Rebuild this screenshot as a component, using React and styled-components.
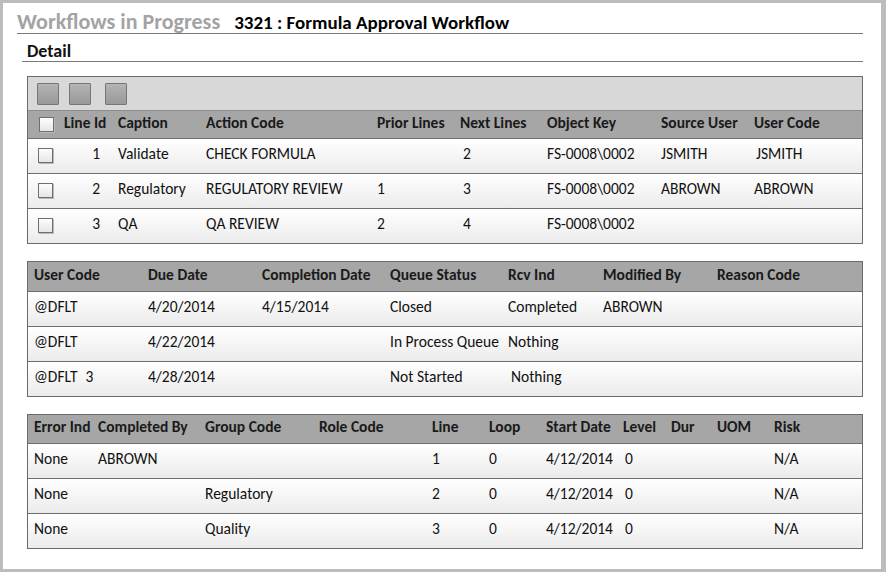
import React from 'react';
import styled, { createGlobalStyle } from 'styled-components';

const GlobalStyle = createGlobalStyle`
  html, body {
    margin: 0;
    padding: 0;
    background: #ffffff;
  }
  body {
    font-family: Carlito, Lato, "Liberation Sans", sans-serif;
    color: #111;
  }
`

const Frame = styled.div`
  width: 886px;
  height: 572px;
  box-sizing: border-box;
  border: 3px solid #bcbcbc;
  border-right-width: 5px;
  padding: 8px 18px 0 14px;
  background: #fff;
`

const TitleRow = styled.div`
  display: flex;
  align-items: baseline;
  gap: 14px;
  height: 22px;
  border-bottom: 1px solid #7a7a7a;
`

const PageTitle = styled.span`
  font-size: 22px;
  font-weight: 700;
  color: #a3a3a3;
  line-height: 22px;
`

const RecordTitle = styled.span`
  font-size: 19px;
  font-weight: 700;
  color: #000;
  line-height: 22px;
`

const SectionTitle = styled.div`
  margin: 7px 0 0 5px;
  padding-left: 5px;
  height: 20px;
  line-height: 20px;
  font-size: 18px;
  font-weight: 700;
  border-bottom: 1px solid #7a7a7a;
`

const Tables = styled.div`
  display: flex;
  flex-direction: column;
  gap: 17px;
  margin: 14px 0 0 10px;
  width: 836px;
`

const Grid = styled.div`
  border: 1px solid #6a6a6a;
  background: #fff;
  font-size: 15.5px;
`

const Toolbar = styled.div`
  display: flex;
  align-items: center;
  gap: 10px;
  height: 34px;
  box-sizing: border-box;
  padding-left: 9px;
  background: #d8d8d8;
  border-bottom: 1px solid #8c8c8c;
`

const ToolButton = styled.div`
  width: 20px;
  height: 20px;
  margin-left: ${p => (p.$extra ? '4px' : '0')};
  border: 1px solid #767676;
  border-radius: 1px;
  background: linear-gradient(#b4b4b4, #989898);
`

const Row = styled.div`
  display: grid;
  grid-template-columns: ${p => p.$cols};
  align-items: center;
  padding-left: ${p => p.$indent}px;
  box-sizing: border-box;
  white-space: nowrap;
`

const HeadRow = styled(Row)`
  height: ${p => p.$h}px;
  padding-bottom: 5px;
  background: #a6a6a6;
  font-weight: 700;
  color: #1a1a1a;
`

const BodyRow = styled(Row)`
  height: 35px;
  padding-bottom: 6px;
  background: linear-gradient(#ffffff, #ebebeb);
  border-top: 1px solid #6f6f6f;
`

const Cell = styled.span`
  text-align: ${p => (p.$right ? 'right' : 'left')};
  padding-right: ${p => (p.$right ? '18px' : '0')};
  padding-left: ${p => p.$shift || 0}px;
`

const Check = styled.span`
  display: block;
  width: 13px;
  height: 13px;
  margin-left: ${p => p.$shift || 0}px;
  margin-top: ${p => (p.$row ? '4px' : '0')};
  border: 1px solid #6e6e6e;
  background: linear-gradient(#fdfdfd, #e6e6e6);
  box-shadow: 1px 1px 0 #b9b9b9;
`

const UserCell = styled.span`
  margin-left: 8px;
`

const lineCols = '26px 54px 88px 171px 83px 87px 114px 93px 1fr'
const queueCols = '114px 114px 128px 118px 95px 114px 1fr'
const detailCols = '64px 107px 114px 113px 57px 57px 77px 48px 46px 57px 1fr'

const lines = [
  ['1', 'Validate', 'CHECK FORMULA', '', '2', 'FS-0008\\0002', 'JSMITH', 'JSMITH'],
  ['2', 'Regulatory', 'REGULATORY REVIEW', '1', '3', 'FS-0008\\0002', 'ABROWN', 'ABROWN'],
  ['3', 'QA', 'QA REVIEW', '2', '4', 'FS-0008\\0002', '', ''],
]

const queue = [
  ['@DFLT', '4/20/2014', '4/15/2014', 'Closed', 'Completed', 'ABROWN', ''],
  ['@DFLT', '4/22/2014', '', 'In Process Queue', 'Nothing', '', ''],
  ['@DFLT', '4/28/2014', '', 'Not Started', 'Nothing', '', ''],
]

const details = [
  ['None', 'ABROWN', '', '', '1', '0', '4/12/2014', '0', '', '', 'N/A'],
  ['None', '', 'Regulatory', '', '2', '0', '4/12/2014', '0', '', '', 'N/A'],
  ['None', '', 'Quality', '', '3', '0', '4/12/2014', '0', '', '', 'N/A'],
]

function App() {
  return (
    <Frame>
      <GlobalStyle />
      <TitleRow>
        <PageTitle>Workflows in Progress</PageTitle>
        <RecordTitle>3321 : Formula Approval Workflow</RecordTitle>
      </TitleRow>
      <SectionTitle>Detail</SectionTitle>

      <Tables>
        <Grid>
          <Toolbar>
            <ToolButton />
            <ToolButton />
            <ToolButton $extra />
          </Toolbar>
          <HeadRow $cols={lineCols} $indent={10} $h={27}>
            <Check $shift={1} $row />
            <Cell>Line Id</Cell>
            <Cell>Caption</Cell>
            <Cell>Action Code</Cell>
            <Cell>Prior Lines</Cell>
            <Cell>Next Lines</Cell>
            <Cell>Object Key</Cell>
            <Cell>Source User</Cell>
            <Cell>User Code</Cell>
          </HeadRow>
          {lines.map((r) => (
            <BodyRow key={r[0]} $cols={lineCols} $indent={10}>
              <Check $row />
              <Cell $right>{r[0]}</Cell>
              <Cell>{r[1]}</Cell>
              <Cell>{r[2]}</Cell>
              <Cell>{r[3]}</Cell>
              <Cell $shift={3}>{r[4]}</Cell>
              <Cell>{r[5]}</Cell>
              <Cell>{r[6]}</Cell>
              <Cell $shift={r[0] === '1' ? 2 : -3}>{r[7]}</Cell>
            </BodyRow>
          ))}
        </Grid>

        <Grid>
          <HeadRow $cols={queueCols} $indent={6} $h={29}>
            <Cell>User Code</Cell>
            <Cell>Due Date</Cell>
            <Cell>Completion Date</Cell>
            <Cell>Queue Status</Cell>
            <Cell>Rcv Ind</Cell>
            <Cell>Modified By</Cell>
            <Cell>Reason Code</Cell>
          </HeadRow>
          {queue.map((r, i) => (
            <BodyRow key={i} $cols={queueCols} $indent={6}>
              <Cell>
                {r[0]}
                {i === 2 && <UserCell>3</UserCell>}
              </Cell>
              <Cell>{r[1]}</Cell>
              <Cell>{r[2]}</Cell>
              <Cell>{r[3]}</Cell>
              <Cell $shift={i === 2 ? 3 : 0}>{r[4]}</Cell>
              <Cell>{r[5]}</Cell>
              <Cell>{r[6]}</Cell>
            </BodyRow>
          ))}
        </Grid>

        <Grid>
          <HeadRow $cols={detailCols} $indent={6} $h={28}>
            <Cell>Error Ind</Cell>
            <Cell>Completed By</Cell>
            <Cell>Group Code</Cell>
            <Cell>Role Code</Cell>
            <Cell>Line</Cell>
            <Cell>Loop</Cell>
            <Cell>Start Date</Cell>
            <Cell>Level</Cell>
            <Cell>Dur</Cell>
            <Cell>UOM</Cell>
            <Cell>Risk</Cell>
          </HeadRow>
          {details.map((r, i) => (
            <BodyRow key={i} $cols={detailCols} $indent={6}>
              {r.map((v, j) => (
                <Cell key={j} $shift={j === 7 ? 2 : 0}>{v}</Cell>
              ))}
            </BodyRow>
          ))}
        </Grid>
      </Tables>
    </Frame>
  );
}

export default App;
